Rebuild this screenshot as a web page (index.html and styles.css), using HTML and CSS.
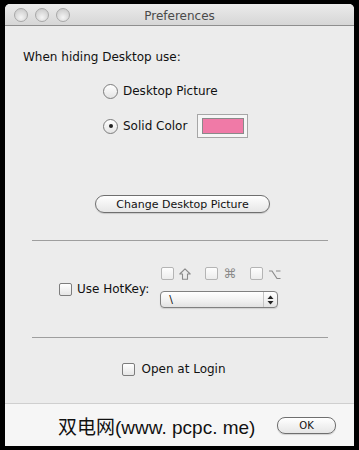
FILE: index.html
```html
<!DOCTYPE html>
<html lang="en">
<head>
    <meta charset="UTF-8">
    <meta name="viewport" content="width=device-width, initial-scale=1.0">
    <title>Preferences</title>
    <link rel="stylesheet" href="styles.css">
</head>
<body>
    <div class="window">
        <div class="titlebar">
            <div class="lights">
                <span class="light"></span>
                <span class="light"></span>
                <span class="light"></span>
            </div>
            <div class="title">Preferences</div>
        </div>

        <div class="content">
            <div class="heading">When hiding Desktop use:</div>

            <div class="radios">
                <label class="option first">
                    <span class="radio"></span>
                    <span>Desktop Picture</span>
                </label>
                <label class="option second">
                    <span class="radio checked"></span>
                    <span>Solid Color</span>
                    <span class="well"><span class="swatch"></span></span>
                </label>
            </div>

            <div class="button-row">
                <button class="pill wide">Change Desktop Picture</button>
            </div>

            <hr class="sep first-sep">

            <div class="hotkey">
                <label class="check-label">
                    <span class="box"></span>
                    <span>Use HotKey:</span>
                </label>
                <div class="keys">
                    <div class="mods">
                        <span class="mod">
                            <span class="box small"></span>
                            <svg class="glyph" width="12" height="12" viewBox="0 0 12 12">
                                <path d="M6 0.8 L11.2 6 L8.5 6 L8.5 11.2 L3.5 11.2 L3.5 6 L0.8 6 Z" fill="none" stroke="#8a8a8a" stroke-width="1.1" stroke-linejoin="round"/>
                            </svg>
                        </span>
                        <span class="mod">
                            <span class="box small"></span>
                            <span class="glyph-text">&#8984;</span>
                        </span>
                        <span class="mod">
                            <span class="box small"></span>
                            <svg class="glyph" width="13" height="12" viewBox="0 0 13 12">
                                <path d="M1 3 L4 3 L9 10.5 L12.5 10.5" fill="none" stroke="#8a8a8a" stroke-width="1.2"/>
                                <path d="M8 3 L12.5 3" fill="none" stroke="#8a8a8a" stroke-width="1.2"/>
                            </svg>
                        </span>
                    </div>
                    <div class="popup">
                        <span class="popup-value">\</span>
                        <span class="stepper">
                            <svg width="7" height="10" viewBox="0 0 7 10">
                                <path d="M3.5 0.5 L6.5 4 L0.5 4 Z" fill="#222"/>
                                <path d="M3.5 9.5 L6.5 6 L0.5 6 Z" fill="#222"/>
                            </svg>
                        </span>
                    </div>
                </div>
            </div>

            <hr class="sep second-sep">

            <div class="login">
                <label class="check-label">
                    <span class="box"></span>
                    <span>Open at Login</span>
                </label>
            </div>
        </div>

        <div class="footer">
            <span class="watermark">双电网(www. pcpc. me)</span>
            <button class="pill ok">OK</button>
        </div>
    </div>
</body>
</html>
```

FILE: styles.css
```css
body {
    margin: 0;
    padding: 4px 5px 0 5px;
    background-color: #000;
    font-family: "DejaVu Sans", sans-serif;
    font-size: 12px;
    color: #111;
}

.window {
    width: 349px;
    height: 442px;
    background-color: #ececec;
    border-radius: 5px 5px 0 0;
    display: flex;
    flex-direction: column;
    overflow: hidden;
}

.titlebar {
    height: 21px;
    flex: none;
    position: relative;
    background: linear-gradient(#ebebeb, #d6d6d6);
    border-bottom: 1px solid #8e8e8e;
    display: flex;
    align-items: center;
    justify-content: center;
}

.lights {
    position: absolute;
    left: 9px;
    top: 4px;
    display: flex;
    gap: 7px;
}

.light {
    width: 12px;
    height: 12px;
    border-radius: 50%;
    border: 1px solid #a8a8a8;
    background: radial-gradient(circle at 50% 70%, #f4f4f4, #d2d2d2 70%, #c4c4c4);
}

.title {
    font-size: 12px;
    color: #4a4a4a;
    padding-top: 3px;
}

.content {
    flex: 1;
    display: flex;
    flex-direction: column;
}

.heading {
    margin: 23px 0 0 18px;
    height: 16px;
    line-height: 16px;
}

.radios {
    margin-left: 98px;
    display: flex;
    flex-direction: column;
}

.option {
    display: flex;
    align-items: center;
    gap: 5px;
}

.option.first {
    margin-top: 18px;
    height: 16px;
}

.option.second {
    margin-top: 15px;
    height: 24px;
}

.radio {
    width: 13px;
    height: 13px;
    border-radius: 50%;
    border: 1px solid #7d7d7d;
    background: linear-gradient(#ffffff, #e4e4e4);
    display: flex;
    align-items: center;
    justify-content: center;
}

.radio.checked::after {
    content: "";
    width: 4px;
    height: 4px;
    border-radius: 50%;
    background-color: #222;
}

.well {
    margin-left: 5px;
    width: 49px;
    height: 22px;
    border: 1px solid #a6a6a6;
    background-color: #f6f6f6;
    display: flex;
    align-items: center;
    justify-content: center;
}

.swatch {
    width: 40px;
    height: 14px;
    border: 1px solid #8a8a8a;
    background-color: #f07aa7;
}

.button-row {
    margin-top: 57px;
    padding-left: 90px;
}

.pill {
    font-family: "DejaVu Sans", sans-serif;
    font-size: 11px;
    color: #111;
    height: 18px;
    border: 1px solid #6f6f6f;
    border-radius: 9px;
    background: linear-gradient(#ffffff, #f2f2f2 50%, #e6e6e6);
    padding: 0;
    box-shadow: 0 1px 1px rgba(0, 0, 0, 0.15);
}

.pill.wide {
    width: 175px;
}

.sep {
    margin: 0 26px 0 27px;
    border: none;
    border-top: 1px solid #9e9e9e;
    height: 0;
}

.first-sep {
    margin-top: 27px;
}

.second-sep {
    margin-top: 29px;
}

.hotkey {
    margin-top: 26px;
    padding-left: 54px;
    display: flex;
    align-items: flex-end;
    gap: 11px;
}

.check-label {
    display: flex;
    align-items: center;
    gap: 5px;
}

.hotkey .check-label {
    margin-bottom: 12px;
}

.box {
    width: 11px;
    height: 11px;
    border: 1px solid #7d7d7d;
    border-radius: 2px;
    background: linear-gradient(#ffffff, #e6e6e6);
}

.box.small {
    border-color: #b4b4b4;
    background: linear-gradient(#fdfdfd, #ececec);
}

.keys {
    display: flex;
    flex-direction: column;
    gap: 11px;
}

.mods {
    display: flex;
    gap: 14px;
    padding-left: 1px;
    height: 13px;
    align-items: center;
}

.mod {
    display: flex;
    align-items: center;
    gap: 5px;
}

.glyph-text {
    font-size: 13px;
    color: #8a8a8a;
    line-height: 13px;
}

.popup {
    width: 116px;
    height: 15px;
    border: 1px solid #808080;
    border-radius: 4px;
    background: linear-gradient(#ffffff, #f0f0f0 60%, #e2e2e2);
    display: flex;
    align-items: center;
    justify-content: space-between;
    box-shadow: 0 1px 1px rgba(0, 0, 0, 0.12);
}

.popup-value {
    padding-left: 8px;
    font-size: 11px;
}

.stepper {
    width: 13px;
    height: 15px;
    border-left: 1px solid #c4c4c4;
    display: flex;
    align-items: center;
    justify-content: center;
}

.login {
    margin-top: 24px;
    display: flex;
    justify-content: center;
    padding-right: 11px;
}

.login .check-label {
    gap: 6px;
}

.footer {
    height: 42px;
    flex: none;
    border-top: 1px solid #cfcfcf;
    background-color: #f6f6f6;
    display: flex;
    align-items: center;
    padding-left: 53px;
}

.watermark {
    font-family: "Liberation Sans", "Noto Sans CJK SC", sans-serif;
    font-size: 19px;
    color: #111;
    text-shadow: 0 0 1px #fff;
    width: 219px;
}

.pill.ok {
    width: 59px;
    height: 17px;
    font-size: 10px;
    border-radius: 8px;
}
```
